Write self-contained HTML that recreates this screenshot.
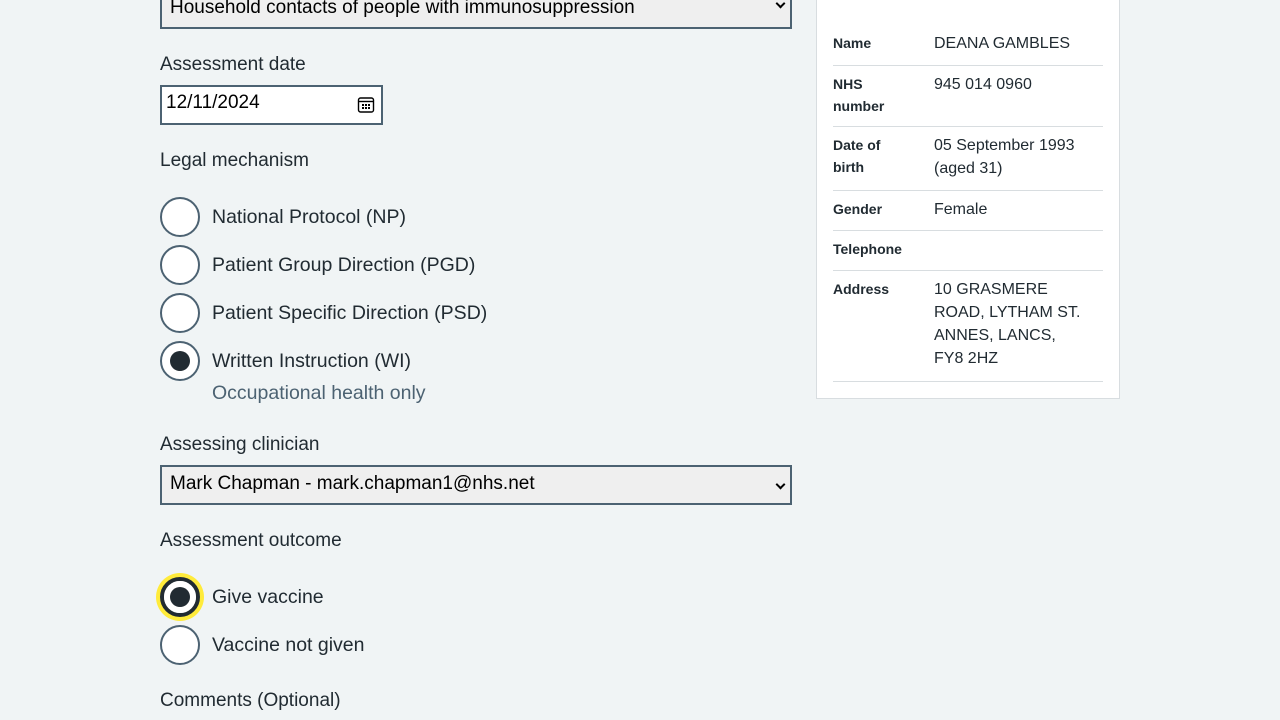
<!DOCTYPE html>
<html><head><meta charset="utf-8"><style>
*{box-sizing:border-box;margin:0;padding:0}
body{width:1280px;height:720px;background:#f0f4f5;font-family:"Liberation Sans",sans-serif;color:#212b32;position:relative;overflow:hidden}
.a{position:absolute;white-space:nowrap}
.lbl{font-size:19px}
.sel{position:absolute;left:160px;width:632px;height:40px;background:#efefef;border:2px solid #4c6272;font-size:19px;color:#000;padding:6px 8px}
.sel .chev{position:absolute;right:6px;top:14px;width:7px;height:7px;border-right:2px solid #000;border-bottom:2px solid #000;transform:rotate(45deg)}
.r{position:absolute;left:160px;width:40px;height:40px;border-radius:50%;border:2px solid #4c6272;background:#fff}
.r.on::after{content:"";position:absolute;left:8px;top:8px;width:20px;height:20px;border-radius:50%;background:#212b32}
.rt{position:absolute;left:212px;font-size:19.5px;white-space:nowrap}
.k{position:absolute;left:833px;font-size:14px;font-weight:bold;line-height:22px}
.v{position:absolute;left:934px;font-size:16px;line-height:23px}
.hr{position:absolute;left:833px;width:270px;height:1px;background:#d8dde0}
</style></head><body>
<div class="sel" style="top:-11px">Household contacts of people with immunosuppression<span class="chev" style="top:9px"></span></div>
<div class="a lbl" style="left:160px;top:54px">Assessment date</div>
<div style="position:absolute;left:160px;top:85px;width:223px;height:40px;background:#fff;border:2px solid #4c6272;font-size:19px;color:#000;padding:5px 4px">12/11/2024
<svg style="position:absolute;left:195px;top:9px" width="18" height="18" viewBox="0 0 18 18"><rect x="1.5" y="2" width="15" height="14" rx="2" fill="none" stroke="#000" stroke-width="1.4"/><line x1="1.5" y1="5.5" x2="16.5" y2="5.5" stroke="#000" stroke-width="1.4"/><g fill="#000"><rect x="5" y="8" width="2" height="2"/><rect x="8" y="8" width="2" height="2"/><rect x="11" y="8" width="2" height="2"/><rect x="5" y="11" width="2" height="2"/><rect x="8" y="11" width="2" height="2"/><rect x="11" y="11" width="2" height="2"/></g></svg></div>
<div class="a lbl" style="left:160px;top:150px">Legal mechanism</div>
<div class="r" style="top:197px"></div><div class="rt" style="top:206px">National Protocol (NP)</div>
<div class="r" style="top:245px"></div><div class="rt" style="top:254px">Patient Group Direction (PGD)</div>
<div class="r" style="top:293px"></div><div class="rt" style="top:302px">Patient Specific Direction (PSD)</div>
<div class="r on" style="top:341px"></div><div class="rt" style="top:350px">Written Instruction (WI)</div>
<div class="rt" style="top:382px;color:#4c6272">Occupational health only</div>
<div class="a lbl" style="left:160px;top:434px">Assessing clinician</div>
<div class="sel" style="top:465px">Mark Chapman - mark.chapman1@nhs.net<span class="chev"></span></div>
<div class="a lbl" style="left:160px;top:530px">Assessment outcome</div>
<div style="position:absolute;left:156px;top:573px;width:48px;height:48px;border-radius:50%;background:#ffeb3b"></div>
<div class="r on" style="top:577px;border:4px solid #212b32"><span style="position:absolute;left:0;top:0;width:32px;height:32px;border-radius:50%;border:3px solid #fff"></span></div>
<style>.r.on[style*="577"]::after{left:6px;top:6px}</style>
<div class="rt" style="top:586px">Give vaccine</div>
<div class="r" style="top:625px"></div><div class="rt" style="top:634px">Vaccine not given</div>
<div class="a lbl" style="left:160px;top:690px">Comments (Optional)</div>

<div style="position:absolute;left:816px;top:-2px;width:304px;height:401px;background:#fff;border:1px solid #d8dde0"></div>
<div class="k" style="top:32px">Name</div><div class="v" style="top:32px">DEANA GAMBLES</div>
<div class="hr" style="top:65px"></div>
<div class="k" style="top:73px">NHS<br>number</div><div class="v" style="top:73px">945 014 0960</div>
<div class="hr" style="top:126px"></div>
<div class="k" style="top:134px">Date of<br>birth</div><div class="v" style="top:134px">05 September 1993<br>(aged 31)</div>
<div class="hr" style="top:190px"></div>
<div class="k" style="top:198px">Gender</div><div class="v" style="top:198px">Female</div>
<div class="hr" style="top:230px"></div>
<div class="k" style="top:238px">Telephone</div>
<div class="hr" style="top:270px"></div>
<div class="k" style="top:278px">Address</div><div class="v" style="top:278px">10 GRASMERE<br>ROAD, LYTHAM ST.<br>ANNES, LANCS,<br>FY8 2HZ</div>
<div class="hr" style="top:381px"></div>
</body></html>
